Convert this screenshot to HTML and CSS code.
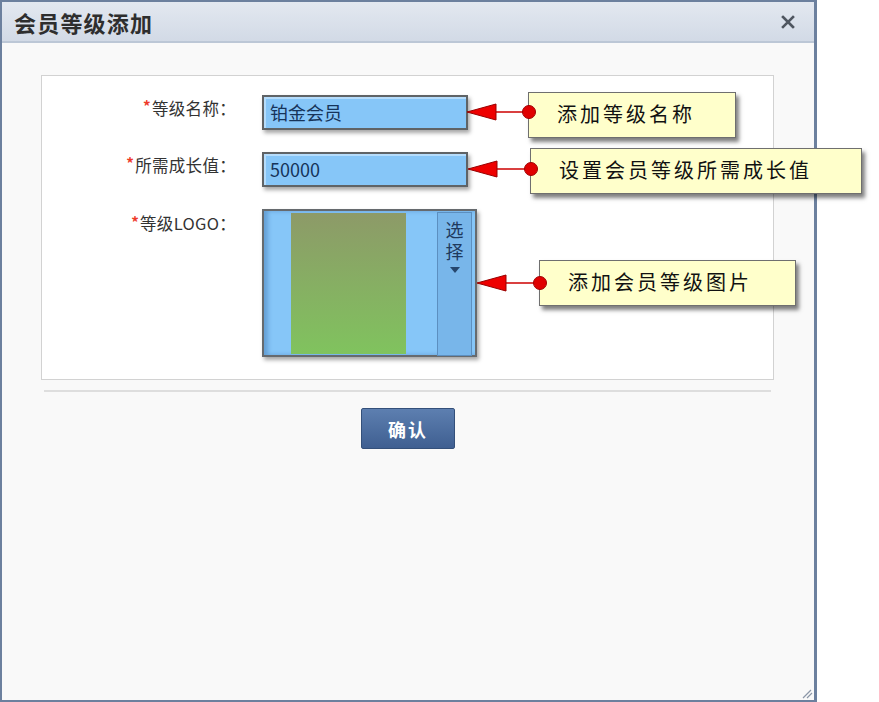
FILE: index.html
```html
<!DOCTYPE html>
<html lang="zh">
<head>
<meta charset="utf-8">
<link rel="stylesheet" href="styles.css">
</head>
<body>
<div class="dialog">
  <div class="header">
    <h1 class="title">会员等级添加</h1>
    <svg class="close" width="14" height="14" viewBox="0 0 14 14"><path d="M2 2 L12 12 M12 2 L2 12" stroke="#4f5660" stroke-width="2.6" stroke-linecap="square"/></svg>
  </div>
  <div class="body">
    <div class="panel">
      <div class="row">
        <div class="label"><span class="star">*</span>等级名称：</div>
        <div class="input">铂金会员</div>
      </div>
      <div class="row">
        <div class="label"><span class="star">*</span>所需成长值：</div>
        <div class="input">50000</div>
      </div>
      <div class="row">
        <div class="label label-logo"><span class="star">*</span>等级LOGO：</div>
        <div class="logo">
          <div class="logo-img"></div>
          <div class="pick">
            <span class="pick-text">选择</span>
            <svg width="10" height="6" viewBox="0 0 10 6"><path d="M0 0 H10 L5 6 Z" fill="#27476e"/></svg>
          </div>
        </div>
      </div>
    </div>
    <div class="sep"></div>
    <div class="actions"><button class="btn">确认</button></div>
  </div>

  <div class="callout c1">添加等级名称</div>
  <div class="callout c2">设置会员等级所需成长值</div>
  <div class="callout c3">添加会员等级图片</div>
  <svg class="arrows" width="879" height="702" viewBox="0 0 879 702">
    <g stroke="#c00" stroke-width="1.5">
      <line x1="494" y1="112" x2="528" y2="112"/>
      <line x1="495" y1="169" x2="530" y2="169"/>
      <line x1="504" y1="283" x2="540" y2="283"/>
    </g>
    <g fill="#ee0000" stroke="#990000" stroke-width="1">
      <polygon points="467,112 496,104 496,120"/>
      <polygon points="468,169 497,161 497,177"/>
      <polygon points="477,283 506,275 506,291"/>
    </g>
    <g fill="#e00000" stroke="#a00000" stroke-width="1">
      <circle cx="529" cy="112" r="6.5"/>
      <circle cx="531" cy="169" r="6.5"/>
      <circle cx="540" cy="283" r="6.5"/>
    </g>
  </svg>
  <svg class="grip" width="11" height="10" viewBox="0 0 11 10"><path d="M1 9 L9 1 M5 9 L10 4" stroke="#8c97a8" stroke-width="1.2"/></svg>
</div>
</body>
</html>
```

FILE: styles.css
```css
* { box-sizing: border-box; }
html, body { margin: 0; padding: 0; background: #ffffff; }
body { font-family: "Noto Sans CJK SC", "Liberation Sans", sans-serif; color: #333; }

.dialog {
  position: relative;
  width: 817px;
  height: 702px;
  border: 2px solid #6c809e;
  border-right-width: 3px;
  background: #f9f9f9;
  display: flex;
  flex-direction: column;
}

.header {
  height: 41px;
  background: linear-gradient(#e3e8f0, #d2dae6);
  border-bottom: 2px solid #bcc7d6;
  display: flex;
  align-items: center;
  justify-content: space-between;
  padding: 0 19px 0 12px;
}
.title {
  margin: 0;
  font-size: 22px;
  font-weight: bold;
  color: #2e2e2e;
  letter-spacing: 1.2px;
  line-height: 1;
}
.close { display: block; }

.body {
  padding: 32px 0 0 39px;
}

.panel {
  width: 733px;
  height: 305px;
  background: #ffffff;
  border: 1px solid #d2d2d2;
  padding: 19px 0 0 0;
  display: flex;
  flex-direction: column;
  gap: 22px;
}
.row {
  display: flex;
  align-items: flex-start;
  gap: 26px;
}
.label {
  width: 194px;
  text-align: right;
  font-size: 16.5px;
  line-height: 26px;
  color: #333;
  letter-spacing: 0.3px;
}
.label-logo { line-height: 29px; }
.star {
  color: #ee3a2a;
  font-size: 15px;
  font-weight: bold;
  vertical-align: top;
  position: relative;
  top: -2px;
  margin-right: 1px;
}

.input {
  width: 206px;
  height: 35px;
  background: #86c6f8;
  border: 2px solid #5f6366;
  box-shadow: inset 2px 2px 0 #b5dcfb, 2px 3px 4px rgba(0,0,0,0.35);
  padding: 0 6px;
  font-size: 18px;
  line-height: 31px;
  color: #16345a;
}

.logo {
  width: 215px;
  height: 148px;
  background: #86c6f8;
  border: 2px solid #666a6e;
  box-shadow: inset 4px 0 4px rgba(40,90,150,0.35), 2px 3px 4px rgba(0,0,0,0.35);
  display: flex;
  padding: 2px 3px 1px 27px;
  gap: 31px;
}
.logo-img {
  width: 116px;
  height: 141px;
  background: linear-gradient(#8d9a68, #80c35e);
}
.pick {
  width: 35px;
  margin-top: -1px;
  margin-bottom: -2px;
  background: #78b6ea;
  border: 1px solid #5c8fc0;
  display: flex;
  flex-direction: column;
  align-items: center;
  padding-top: 8px;
  color: #1f3a5e;
}
.pick-text {
  writing-mode: vertical-rl;
  font-size: 18px;
  line-height: 22px;
  letter-spacing: 4px;
}
.pick svg { margin-top: 2px; }

.sep {
  margin: 10px 0 0 3px;
  width: 727px;
  height: 2px;
  background: #dedede;
}
.actions {
  display: flex;
  justify-content: center;
  padding-top: 16px;
  margin-left: -39px;
}
.btn {
  width: 94px;
  height: 41px;
  border: 1px solid #34507a;
  border-radius: 2px;
  background: linear-gradient(#5d7fb0, #3f5f91);
  color: #fff;
  font-family: "Noto Sans CJK SC", sans-serif;
  font-size: 18px;
  font-weight: bold;
  letter-spacing: 2px;
  padding: 0;
}

.callout {
  position: absolute;
  background: #ffffcb;
  border: 1px solid #6f6f6f;
  box-shadow: 3px 4px 4px rgba(0,0,0,0.5);
  font-size: 20px;
  letter-spacing: 3px;
  color: #111;
  line-height: 42px;
  font-family: "Noto Sans CJK SC", sans-serif;
}
.c1 { left: 526px; top: 90px; width: 208px; height: 46px; padding-left: 28px; }
.c2 { left: 528px; top: 146px; width: 332px; height: 46px; padding-left: 28px; }
.c3 { left: 537px; top: 258px; width: 257px; height: 46px; padding-left: 28px; }

.arrows { position: absolute; left: -2px; top: -2px; pointer-events: none; }
.grip { position: absolute; right: 1px; bottom: 1px; }
```
